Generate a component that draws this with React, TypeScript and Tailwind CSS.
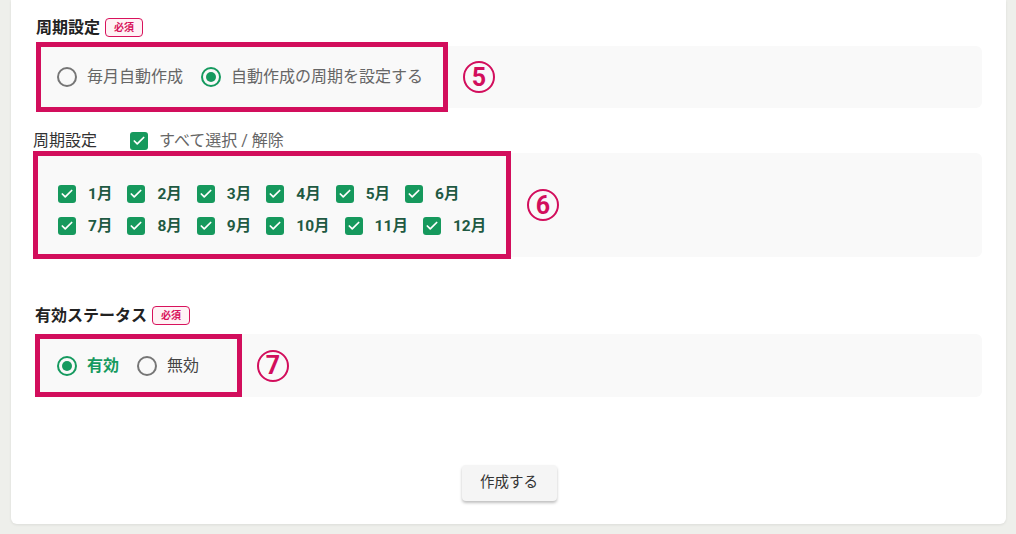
import { Check } from 'lucide-react';

const font = { fontFamily: "Roboto, 'Noto Sans CJK JP', sans-serif" };

function Badge() {
  return (
    <span className="ml-[5px] inline-flex h-[19px] items-center rounded-[4px] border border-[#d8125c] bg-[#fff2f5] px-[8px] text-[10px] font-bold leading-none text-[#d8125c]">
      必須
    </span>
  );
}

function Radio({ checked, label, strong }: { checked?: boolean; label: string; strong?: boolean }) {
  return (
    <label className="flex items-center gap-[10px]">
      <span
        className={`flex h-[20px] w-[20px] items-center justify-center rounded-full border-2 ${
          checked ? 'border-[#159a5f]' : 'border-[#767676]'
        }`}
      >
        {checked && <span className="h-[10px] w-[10px] rounded-full bg-[#159a5f]" />}
      </span>
      <span className={`text-[16px] leading-[20px] ${strong ? 'font-bold text-[#159a5f]' : 'text-[#666]'}`}>
        {label}
      </span>
    </label>
  );
}

function Box() {
  return (
    <span className="flex h-[18px] w-[18px] shrink-0 items-center justify-center rounded-[3px] bg-[#16995d]">
      <Check className="h-[14px] w-[14px] text-white" strokeWidth={3} />
    </span>
  );
}

function Month({ m }: { m: number }) {
  return (
    <div className="flex h-[18px] items-center gap-[12px]">
      <Box />
      <span className="text-[15.5px] font-bold leading-[18px] text-[#1f5a43]">{m}月</span>
    </div>
  );
}

function Circled({ n }: { n: number }) {
  return (
    <span className="flex h-[32px] w-[32px] items-center justify-center rounded-full border-2 border-[#d20e5c] text-[25px] font-bold leading-none text-[#d20e5c]">
      {n}
    </span>
  );
}

export default function App() {
  return (
    <div className="min-h-[534px] bg-[#eeefeb] pl-[11px] pr-[10px] pb-[10px]" style={font}>
      <div className="flex h-[524px] flex-col rounded-b-[6px] bg-white pl-[25px] pr-[24px] pt-[18px] shadow-[0_1px_3px_rgba(0,0,0,0.08)]">
        {/* 周期設定 */}
        <div className="flex h-[19px] items-center">
          <span className="text-[16px] font-bold leading-[19px] text-[#222]">周期設定</span>
          <Badge />
        </div>
        <div className="mt-[9px] flex h-[62px] items-center rounded-[6px] bg-[#f9f9f9]">
          <div className="flex h-[70px] w-[412px] shrink-0 items-center gap-[18px] border-[5px] border-[#d20e5c] pl-[16px]">
            <Radio label="毎月自動作成" />
            <Radio checked label="自動作成の周期を設定する" />
          </div>
          <div className="ml-[15px]">
            <Circled n={5} />
          </div>
        </div>

        <div className="mt-[24px] flex h-[18px] items-center">
          <span className="-ml-[3px] w-[97px] text-[16px] leading-[18px] text-[#333]">周期設定</span>
          <Box />
          <span className="ml-[11px] text-[16px] leading-[18px] text-[#666]">すべて選択 / 解除</span>
        </div>
        <div className="mt-[3px] flex h-[104px] items-center rounded-[6px] bg-[#f9f9f9]">
          <div className="-ml-[3px] flex h-[108px] w-[478px] shrink-0 flex-col justify-center gap-[14px] border-[5px] border-[#d20e5c] pl-[20px] pt-[10px]">
            <div className="flex gap-[15px]">
              {[1, 2, 3, 4, 5, 6].map((m) => (
                <Month key={m} m={m} />
              ))}
            </div>
            <div className="flex gap-[15px]">
              {[7, 8, 9, 10, 11, 12].map((m) => (
                <Month key={m} m={m} />
              ))}
            </div>
          </div>
          <div className="ml-[16px]">
            <Circled n={6} />
          </div>
        </div>

        {/* 有効ステータス */}
        <div className="mt-[49px] flex h-[19px] items-center">
          <span className="-ml-[1px] text-[16px] font-bold leading-[19px] text-[#222]">有効ステータス</span>
          <Badge />
        </div>
        <div className="mt-[9px] flex h-[63px] items-center rounded-[6px] bg-[#f9f9f9]">
          <div className="-ml-[1px] flex h-[63px] w-[207px] shrink-0 items-center gap-[18px] border-[5px] border-[#d20e5c] pl-[17px]">
            <Radio checked strong label="有効" />
            <label className="flex items-center gap-[10px]">
              <span className="h-[20px] w-[20px] rounded-full border-2 border-[#767676]" />
              <span className="text-[16px] leading-[20px] text-[#444]">無効</span>
            </label>
          </div>
          <div className="ml-[15px]">
            <Circled n={7} />
          </div>
        </div>

        <div className="mt-[68px] flex justify-center">
          <button className="h-[36px] w-[95px] rounded-[4px] bg-[#f5f5f5] text-[14.5px] text-[#333] shadow-[0_2px_3px_rgba(0,0,0,0.25)]">
            作成する
          </button>
        </div>
      </div>
    </div>
  );
}
